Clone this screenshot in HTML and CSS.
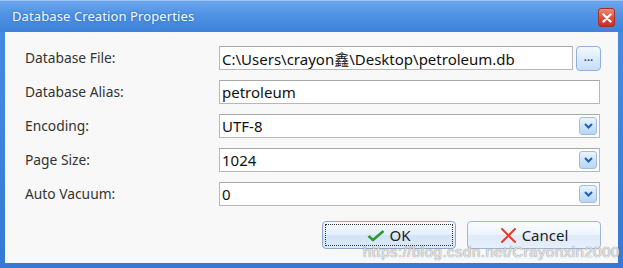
FILE: index.html
```html
<!DOCTYPE html>
<html>
<head>
<meta charset="utf-8">
<link rel="stylesheet" href="styles.css">
</head>
<body>
<div class="window">
  <div class="titlebar">
    <span class="title">Database Creation Properties</span>
    <span class="close">
      <svg width="10" height="10" viewBox="0 0 10 10"><path d="M1.5 1.5 L8.5 8.5 M8.5 1.5 L1.5 8.5" stroke="#fff" stroke-width="2.4" stroke-linecap="round"/></svg>
    </span>
  </div>
  <div class="content">
    <div class="form">
      <label class="label">Database File:</label>
      <div class="filefield">
        <div class="input">C:\Users\crayon鑫\Desktop\petroleum.db</div>
        <div class="browse">...</div>
      </div>
      <label class="label">Database Alias:</label>
      <div class="input">petroleum</div>
      <label class="label">Encoding:</label>
      <div class="input combo">UTF-8<span class="drop"><svg width="9" height="6" viewBox="0 0 9 6"><path d="M1 1 L4.5 4.5 L8 1" stroke="#1f5fb5" stroke-width="2" fill="none"/></svg></span></div>
      <label class="label">Page Size:</label>
      <div class="input combo">1024<span class="drop"><svg width="9" height="6" viewBox="0 0 9 6"><path d="M1 1 L4.5 4.5 L8 1" stroke="#1f5fb5" stroke-width="2" fill="none"/></svg></span></div>
      <label class="label">Auto Vacuum:</label>
      <div class="input combo">0<span class="drop"><svg width="9" height="6" viewBox="0 0 9 6"><path d="M1 1 L4.5 4.5 L8 1" stroke="#1f5fb5" stroke-width="2" fill="none"/></svg></span></div>
    </div>
    <div class="buttons">
      <div class="btn ok"><span class="focus"><svg width="18" height="13" viewBox="0 0 18 13"><path d="M1.5 7 L6 11 L16.5 2" stroke="#2f9a2f" stroke-width="2.6" fill="none" stroke-linejoin="round"/></svg>OK</span></div>
      <div class="btn cancel"><svg width="17" height="17" viewBox="0 0 17 17"><path d="M2 2 L15 15 M15 2 L2 15" stroke="#e04028" stroke-width="2" stroke-linecap="round"/></svg>Cancel</div>
    </div>
    <div class="watermark">https://blog.csdn.net/Crayonxin2000</div>
  </div>
</div>
</body>
</html>
```
FILE: styles.css
```css
* { box-sizing: border-box; }
html, body { margin: 0; padding: 0; }
body {
  width: 623px;
  height: 268px;
  overflow: hidden;
  font-family: "Noto Sans", "Noto Sans CJK SC", sans-serif;
  background: #fff;
}
.window {
  width: 623px;
  height: 268px;
  display: flex;
  flex-direction: column;
  background: linear-gradient(to bottom, #5a9ae6 0px, #468ae0 30px, #3579d4 100%);
  border-top: 1px solid #9cc3f0;
}
.titlebar {
  height: 31px;
  display: flex;
  align-items: center;
  justify-content: space-between;
  padding: 0 8px 0 12px;
  background: linear-gradient(to bottom, #6aa6ee 0%, #4f92e4 45%, #3e83dc 100%);
}
.title {
  color: #f4f8ff;
  font-size: 13px;
  letter-spacing: 0.1px;
  text-shadow: 0 0 3px rgba(20, 60, 120, 0.5);
  margin-top: -1px;
}
.close {
  width: 17px;
  height: 19px;
  margin-top: 2px;
  border-radius: 3px;
  border: 1px solid #a8302a;
  background: linear-gradient(to bottom, #f08a78 0%, #e0503c 50%, #c8301e 100%);
  display: flex;
  align-items: center;
  justify-content: center;
}
.content {
  flex: 1;
  position: relative;
  margin: 0 5px 5px 5px;
  background: #f8f8f8;
  padding: 14px 17px 0 20px;
}
.form {
  display: grid;
  grid-template-columns: 194px 1fr;
  grid-auto-rows: 24px;
  row-gap: 10px;
  align-items: center;
}
.label {
  font-size: 13.8px;
  color: #333;
  margin-top: -2px;
}
.input {
  height: 24px;
  border: 1px solid #b8b8b8;
  border-top-color: #a8a8a8;
  background: #fff;
  font-size: 15px;
  color: #111;
  padding: 0 2px;
  display: flex;
  align-items: center;
  position: relative;
  width: 381px;
}
.filefield {
  display: flex;
  gap: 3px;
  align-items: center;
}
.filefield .input { width: 354px; }
.browse {
  width: 25px;
  height: 25px;
  border: 1px solid #8fb2dc;
  border-radius: 4px;
  background: linear-gradient(to bottom, #f4f9ff 0%, #dcebfb 50%, #c7def6 100%);
  color: #1f4f8f;
  font-size: 11px;
  font-weight: bold;
  display: flex;
  align-items: center;
  justify-content: center;
  line-height: 1;
  padding-bottom: 4px;
}
.combo { justify-content: flex-start; }
.drop {
  position: absolute;
  right: 2px;
  top: 2px;
  width: 18px;
  height: 18px;
  border: 1px solid #9ebfe4;
  border-radius: 3px;
  background: linear-gradient(to bottom, #eaf4fe 0%, #cfe4f9 50%, #b9d6f4 100%);
  display: flex;
  align-items: center;
  justify-content: center;
}
.buttons {
  display: flex;
  justify-content: flex-end;
  gap: 11px;
  margin-top: 15px;
}
.btn {
  width: 134px;
  height: 28px;
  border: 1px solid #8aa9cf;
  border-radius: 4px;
  background: linear-gradient(to bottom, #f6faff 0%, #e4effb 48%, #d2e4f7 52%, #dceaf9 100%);
  font-size: 15px;
  color: #222;
  display: flex;
  align-items: center;
  justify-content: center;
  gap: 5px;
}
.ok { padding: 2px; }
.focus {
  flex: 1;
  align-self: stretch;
  border: 1px dotted #333;
  display: flex;
  align-items: center;
  justify-content: center;
  gap: 4px;
}
.cancel {
  background: linear-gradient(to bottom, #fbfdff 0%, #edf4fc 48%, #dfebf9 52%, #e6effa 100%);
  border-color: #9fb8d8;
}
.watermark {
  position: absolute;
  left: 358px;
  top: 211px;
  font-family: "Liberation Sans", sans-serif;
  font-size: 15px;
  color: rgba(255, 255, 255, 0.75);
  text-shadow: 0 0 1px rgba(120, 120, 120, 0.8), 0 0 1px rgba(120, 120, 120, 0.6);
  white-space: nowrap;
  letter-spacing: 0.5px;
}
```
